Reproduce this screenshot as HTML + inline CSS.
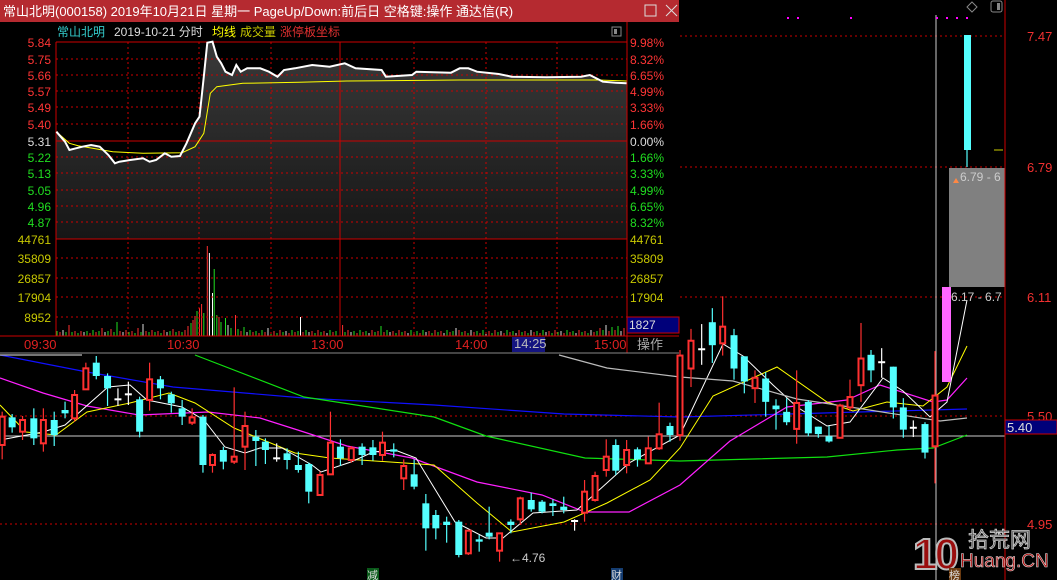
<!DOCTYPE html>
<html><head><meta charset="utf-8">
<style>
html,body{margin:0;padding:0;background:#000;width:1057px;height:580px;overflow:hidden}
svg{display:block}
text{font-family:"Liberation Sans","Noto Sans CJK SC",sans-serif}
</style></head>
<body>
<svg id="s" width="1057" height="580" xmlns="http://www.w3.org/2000/svg">
<rect width="1057" height="580" fill="#000"/>
<g id="main"><line x1="0" y1="36" x2="1005" y2="36" stroke="#c00" stroke-dasharray="2,3"/><line x1="0" y1="167" x2="1005" y2="167" stroke="#c00" stroke-dasharray="2,3"/><line x1="0" y1="297" x2="1005" y2="297" stroke="#c00" stroke-dasharray="2,3"/><line x1="0" y1="416" x2="1005" y2="416" stroke="#c00" stroke-dasharray="2,3"/><line x1="0" y1="524" x2="1005" y2="524" stroke="#c00" stroke-dasharray="2,3"/><line x1="0" y1="436" x2="1005" y2="436" stroke="#ccc"/><line x1="936" y1="15" x2="936" y2="580" stroke="#ccc"/><rect x="787" y="17" width="2" height="2" fill="#f0f"/><rect x="797" y="17" width="2" height="2" fill="#f0f"/><rect x="850" y="17" width="2" height="2" fill="#f0f"/><rect x="936" y="17" width="2" height="2" fill="#f0f"/><rect x="946" y="17" width="2" height="2" fill="#f0f"/><rect x="956" y="17" width="2" height="2" fill="#f0f"/><rect x="966" y="17" width="2" height="2" fill="#f0f"/><polyline points="0,355 87,372 173,387 304,398 434,405 564,414 680,417 967,409" fill="none" stroke="#1010ff" stroke-width="1.2"/><polyline points="195,355 304,397 434,417 486,436 585,458 680,461 827,457 897,450 933,448 967,435" fill="none" stroke="#10e010" stroke-width="1.2"/><polyline points="0,378 43,393 87,406 139,415 208,412 260,418 304,432 347,446 412,458 477,482 542,495 585,512 629,512 680,485 730,441 787,407 847,400 880,385 933,402 947,400 967,378" fill="none" stroke="#ff20ff" stroke-width="1.2"/><polyline points="0,405 26,432 56,435 87,412 130,403 169,393 195,403 234,428 295,453 330,458 434,465 477,503 512,532 564,522 607,503 650,480 680,448 713,396 777,367 827,402 853,411 887,402 923,406 947,387 967,346" fill="none" stroke="#ffff00" stroke-width="1"/><polyline points="0,440 43,432 65,425 108,387 130,385 147,400 182,407 204,420 225,447 245,453 260,448 282,448 312,465 321,472 351,462 373,452 395,450 416,458 455,522 486,538 503,538 533,513 577,510 629,463 680,435 723,344 743,356 773,385 797,407 827,426 850,422 883,378 903,391 930,417 947,402 967,300" fill="none" stroke="#ffffff" stroke-width="1"/><polyline points="0,355 82,355" fill="none" stroke="#bbb" stroke-width="1.2"/><polyline points="559,355 607,368 680,377 733,381 797,399 863,409 940,421 967,418" fill="none" stroke="#bbb" stroke-width="1.2"/><line x1="2.1682567215958368" y1="411.6666666666667" x2="2.1682567215958368" y2="459.3333333333333" stroke="#ff3030" stroke-width="1.2"/><rect x="-0.33174327840416325" y="416.6666666666667" width="5" height="28.333333333333314" fill="#000" stroke="#ff3030" stroke-width="2"/><line x1="12.142237640936687" y1="414" x2="12.142237640936687" y2="432.6666666666667" stroke="#54ffff" stroke-width="1.2"/><rect x="8.642237640936687" y="417.3333333333333" width="7" height="10" fill="#54ffff"/><line x1="22.54987000867303" y1="416" x2="22.54987000867303" y2="440" stroke="#ff3030" stroke-width="1.2"/><rect x="20.04987000867303" y="420" width="5" height="11.666666666666686" fill="#000" stroke="#ff3030" stroke-width="2"/><line x1="33.824804856895055" y1="408.3333333333333" x2="33.824804856895055" y2="445" stroke="#54ffff" stroke-width="1.2"/><rect x="30.324804856895055" y="418.3333333333333" width="7" height="20" fill="#54ffff"/><line x1="43.36513443191674" y1="408.3333333333333" x2="43.36513443191674" y2="451.6666666666667" stroke="#ff3030" stroke-width="1.2"/><rect x="40.86513443191674" y="420" width="5" height="23.333333333333314" fill="#000" stroke="#ff3030" stroke-width="2"/><line x1="54.20641803989592" y1="411.6666666666667" x2="54.20641803989592" y2="446" stroke="#54ffff" stroke-width="1.2"/><rect x="50.70641803989592" y="420" width="7" height="15" fill="#54ffff"/><line x1="65.04770164787511" y1="401.6666666666667" x2="65.04770164787511" y2="418.3333333333333" stroke="#54ffff" stroke-width="1.2"/><rect x="61.54770164787511" y="410" width="7" height="3.333333333333314" fill="#54ffff"/><line x1="74.58803122289679" y1="390" x2="74.58803122289679" y2="421.6666666666667" stroke="#ff3030" stroke-width="1.2"/><rect x="72.08803122289679" y="395" width="5" height="23.333333333333314" fill="#000" stroke="#ff3030" stroke-width="2"/><line x1="85.86296617519514" y1="362.6666666666667" x2="85.86296617519514" y2="390" stroke="#ff3030" stroke-width="1.2"/><rect x="83.36296617519514" y="368.3333333333333" width="5" height="21" fill="#000" stroke="#ff3030" stroke-width="2"/><line x1="96.27059843885516" y1="356" x2="96.27059843885516" y2="379.3333333333333" stroke="#54ffff" stroke-width="1.2"/><rect x="92.77059843885516" y="362.6666666666667" width="7" height="13.333333333333314" fill="#54ffff"/><line x1="107.54553339115351" y1="373.3333333333333" x2="107.54553339115351" y2="406" stroke="#54ffff" stroke-width="1.2"/><rect x="104.04553339115351" y="376" width="7" height="12.333333333333314" fill="#54ffff"/><line x1="117.95316565481353" y1="388.3333333333333" x2="117.95316565481353" y2="406" stroke="#fff" stroke-width="1.2"/><line x1="114.45316565481353" y1="399.3333333333333" x2="121.45316565481353" y2="399.3333333333333" stroke="#fff" stroke-width="2"/><line x1="128.36079791847356" y1="381.6666666666667" x2="128.36079791847356" y2="405" stroke="#fff" stroke-width="1.2"/><line x1="124.86079791847356" y1="394.3333333333333" x2="131.86079791847356" y2="394.3333333333333" stroke="#fff" stroke-width="2"/><line x1="139.63573287077192" y1="396.6666666666667" x2="139.63573287077192" y2="437.3333333333333" stroke="#54ffff" stroke-width="1.2"/><rect x="136.13573287077192" y="399.3333333333333" width="7" height="32.333333333333314" fill="#54ffff"/><line x1="149.60971379011275" y1="362.6666666666667" x2="149.60971379011275" y2="410.6666666666667" stroke="#ff3030" stroke-width="1.2"/><rect x="147.10971379011275" y="379.3333333333333" width="5" height="20.666666666666686" fill="#000" stroke="#ff3030" stroke-width="2"/><line x1="160.45099739809194" y1="376" x2="160.45099739809194" y2="399.3333333333333" stroke="#54ffff" stroke-width="1.2"/><rect x="156.95099739809194" y="379.3333333333333" width="7" height="9" fill="#54ffff"/><line x1="171.29228100607112" y1="391.6666666666667" x2="171.29228100607112" y2="412.6666666666667" stroke="#54ffff" stroke-width="1.2"/><rect x="167.79228100607112" y="394.3333333333333" width="7" height="9" fill="#54ffff"/><line x1="182.1335646140503" y1="400" x2="182.1335646140503" y2="425" stroke="#54ffff" stroke-width="1.2"/><rect x="178.6335646140503" y="408.3333333333333" width="7" height="8.333333333333314" fill="#54ffff"/><line x1="192.10754553339114" y1="408.3333333333333" x2="192.10754553339114" y2="425" stroke="#ff3030" stroke-width="1.2"/><rect x="189.60754553339114" y="417.3333333333333" width="5" height="5.333333333333371" fill="#000" stroke="#ff3030" stroke-width="2"/><line x1="202.94882914137033" y1="415" x2="202.94882914137033" y2="472.6666666666667" stroke="#54ffff" stroke-width="1.2"/><rect x="199.44882914137033" y="416.6666666666667" width="7" height="48.33333333333331" fill="#54ffff"/><line x1="212.48915871639202" y1="453.3333333333333" x2="212.48915871639202" y2="472.6666666666667" stroke="#ff3030" stroke-width="1.2"/><rect x="209.98915871639202" y="455" width="5" height="10" fill="#000" stroke="#ff3030" stroke-width="2"/><line x1="223.33044232437118" y1="446.6666666666667" x2="223.33044232437118" y2="469.3333333333333" stroke="#54ffff" stroke-width="1.2"/><rect x="219.83044232437118" y="450" width="7" height="11.666666666666686" fill="#54ffff"/><line x1="234.17172593235037" y1="387.3333333333333" x2="234.17172593235037" y2="464" stroke="#ff3030" stroke-width="1.2"/><rect x="231.67172593235037" y="456.6666666666667" width="5" height="5" fill="#000" stroke="#ff3030" stroke-width="2"/><line x1="245.01300954032956" y1="411.6666666666667" x2="245.01300954032956" y2="470" stroke="#ff3030" stroke-width="1.2"/><rect x="242.51300954032956" y="426" width="5" height="20.666666666666686" fill="#000" stroke="#ff3030" stroke-width="2"/><line x1="255.85429314830875" y1="430" x2="255.85429314830875" y2="466" stroke="#54ffff" stroke-width="1.2"/><rect x="252.35429314830875" y="436.6666666666667" width="7" height="4.333333333333314" fill="#54ffff"/><line x1="265.3946227233304" y1="438.3333333333333" x2="265.3946227233304" y2="464" stroke="#54ffff" stroke-width="1.2"/><rect x="261.8946227233304" y="441.6666666666667" width="7" height="8.333333333333314" fill="#54ffff"/><line x1="276.6695576756288" y1="443.3333333333333" x2="276.6695576756288" y2="461.6666666666667" stroke="#fff" stroke-width="1.2"/><line x1="273.1695576756288" y1="458.3333333333333" x2="280.1695576756288" y2="458.3333333333333" stroke="#fff" stroke-width="2"/><line x1="287.0771899392888" y1="448.3333333333333" x2="287.0771899392888" y2="469.3333333333333" stroke="#54ffff" stroke-width="1.2"/><rect x="283.5771899392888" y="453.3333333333333" width="7" height="6.666666666666686" fill="#54ffff"/><line x1="298.35212489158717" y1="451.6666666666667" x2="298.35212489158717" y2="472.6666666666667" stroke="#54ffff" stroke-width="1.2"/><rect x="294.85212489158717" y="465" width="7" height="5" fill="#54ffff"/><line x1="308.7597571552472" y1="462.6666666666667" x2="308.7597571552472" y2="503.3333333333333" stroke="#54ffff" stroke-width="1.2"/><rect x="305.2597571552472" y="464" width="7" height="27.666666666666686" fill="#54ffff"/><line x1="320.03469210754555" y1="471.6666666666667" x2="320.03469210754555" y2="496" stroke="#ff3030" stroke-width="1.2"/><rect x="317.53469210754555" y="475" width="5" height="20" fill="#000" stroke="#ff3030" stroke-width="2"/><line x1="330.44232437120554" y1="411.6666666666667" x2="330.44232437120554" y2="475" stroke="#ff3030" stroke-width="1.2"/><rect x="327.94232437120554" y="442.6666666666667" width="5" height="31.666666666666686" fill="#000" stroke="#ff3030" stroke-width="2"/><line x1="340.4163052905464" y1="439.3333333333333" x2="340.4163052905464" y2="466" stroke="#54ffff" stroke-width="1.2"/><rect x="336.9163052905464" y="446.6666666666667" width="7" height="11.666666666666686" fill="#54ffff"/><line x1="351.25758889852556" y1="446" x2="351.25758889852556" y2="462.6666666666667" stroke="#ff3030" stroke-width="1.2"/><rect x="348.75758889852556" y="448.3333333333333" width="5" height="11.666666666666686" fill="#000" stroke="#ff3030" stroke-width="2"/><line x1="362.09887250650475" y1="443.3333333333333" x2="362.09887250650475" y2="465" stroke="#54ffff" stroke-width="1.2"/><rect x="358.59887250650475" y="446.6666666666667" width="7" height="8.333333333333314" fill="#54ffff"/><line x1="372.9401561144839" y1="440" x2="372.9401561144839" y2="460.6666666666667" stroke="#54ffff" stroke-width="1.2"/><rect x="369.4401561144839" y="447.3333333333333" width="7" height="7.666666666666686" fill="#54ffff"/><line x1="382.4804856895056" y1="431.6666666666667" x2="382.4804856895056" y2="460.6666666666667" stroke="#ff3030" stroke-width="1.2"/><rect x="379.9804856895056" y="442.6666666666667" width="5" height="12.333333333333314" fill="#000" stroke="#ff3030" stroke-width="2"/><line x1="393.7554206418040" y1="443.3333333333333" x2="393.7554206418040" y2="457.3333333333333" stroke="#54ffff" stroke-width="1.2"/><rect x="390.2554206418040" y="449.3333333333333" width="7" height="2.333333333333314" fill="#54ffff"/><line x1="403.72940156114486" y1="459.3333333333333" x2="403.72940156114486" y2="490" stroke="#ff3030" stroke-width="1.2"/><rect x="401.22940156114486" y="466" width="5" height="12.333333333333314" fill="#000" stroke="#ff3030" stroke-width="2"/><line x1="414.1370338248049" y1="459.3333333333333" x2="414.1370338248049" y2="489.3333333333333" stroke="#54ffff" stroke-width="1.2"/><rect x="410.6370338248049" y="474.3333333333333" width="7" height="12.333333333333314" fill="#54ffff"/><line x1="425.8413" y1="494" x2="425.8413" y2="550.6666666666666" stroke="#54ffff" stroke-width="1.2"/><rect x="422.3413" y="503.3333333333333" width="7" height="25" fill="#54ffff"/><line x1="435.82133564614045" y1="510" x2="435.82133564614045" y2="539.3333333333333" stroke="#54ffff" stroke-width="1.2"/><rect x="432.32133564614045" y="515" width="7" height="13.333333333333371" fill="#54ffff"/><line x1="446.66261925411965" y1="516.6666666666666" x2="446.66261925411965" y2="542.6666666666666" stroke="#54ffff" stroke-width="1.2"/><rect x="443.16261925411965" y="521.6666666666666" width="7" height="3.333333333333371" fill="#54ffff"/><line x1="458.80294882914137" y1="520" x2="458.80294882914137" y2="557.3333333333334" stroke="#54ffff" stroke-width="1.2"/><rect x="455.30294882914137" y="521.6666666666666" width="7" height="33.333333333333371" fill="#54ffff"/><line x1="468.34327840416306" y1="530" x2="468.34327840416306" y2="555" stroke="#ff3030" stroke-width="1.2"/><rect x="465.84327840416306" y="530.6666666666666" width="5" height="22.666666666666629" fill="#000" stroke="#ff3030" stroke-width="2"/><line x1="479.18456201214225" y1="535" x2="479.18456201214225" y2="551.6666666666666" stroke="#54ffff" stroke-width="1.2"/><rect x="475.68456201214225" y="539.3333333333334" width="7" height="2.333333333333258" fill="#54ffff"/><line x1="489.1585429314831" y1="506.6666666666667" x2="489.1585429314831" y2="539.3333333333334" stroke="#54ffff" stroke-width="1.2"/><rect x="485.6585429314831" y="532.6666666666666" width="7" height="4" fill="#54ffff"/><line x1="499.5661751951431" y1="532.6666666666666" x2="499.5661751951431" y2="561.6666666666666" stroke="#ff3030" stroke-width="1.2"/><rect x="497.0661751951431" y="533.3333333333334" width="5" height="17.333333333333258" fill="#000" stroke="#ff3030" stroke-width="2"/><line x1="510.8411101474415" y1="519.3333333333334" x2="510.8411101474415" y2="533.3333333333334" stroke="#54ffff" stroke-width="1.2"/><rect x="507.3411101474415" y="521.6666666666666" width="7" height="3.333333333333371" fill="#54ffff"/><line x1="520.3014744145707" y1="496.6666666666667" x2="520.3014744145707" y2="525" stroke="#ff3030" stroke-width="1.2"/><rect x="517.8014744145707" y="498.3333333333333" width="5" height="21" fill="#000" stroke="#ff3030" stroke-width="2"/><line x1="531.2230702515178" y1="492.6666666666667" x2="531.2230702515178" y2="511.6666666666667" stroke="#54ffff" stroke-width="1.2"/><rect x="527.7230702515178" y="500" width="7" height="9.333333333333314" fill="#54ffff"/><line x1="542.0642237640937" y1="500" x2="542.0642237640937" y2="513.3333333333334" stroke="#54ffff" stroke-width="1.2"/><rect x="538.5642237640937" y="501.6666666666667" width="7" height="10" fill="#54ffff"/><line x1="552.9054" y1="499.3333333333333" x2="552.9054" y2="516" stroke="#54ffff" stroke-width="1.2"/><rect x="549.4054" y="503.3333333333333" width="7" height="2.666666666666686" fill="#54ffff"/><line x1="563.7467" y1="496.6666666666667" x2="563.7467" y2="513.3333333333334" stroke="#54ffff" stroke-width="1.2"/><rect x="560.2467" y="506.6666666666667" width="7" height="3.333333333333314" fill="#54ffff"/><line x1="574.5880" y1="519.3333333333334" x2="574.5880" y2="530.6666666666666" stroke="#fff" stroke-width="1.2"/><line x1="571.0880" y1="521" x2="578.0880" y2="521" stroke="#fff" stroke-width="2"/><line x1="584.5620" y1="480" x2="584.5620" y2="521.6666666666666" stroke="#ff3030" stroke-width="1.2"/><rect x="582.0620" y="491.6666666666667" width="5" height="21" fill="#000" stroke="#ff3030" stroke-width="2"/><line x1="595.0694" y1="471.6666666666667" x2="595.0694" y2="501.6666666666667" stroke="#ff3030" stroke-width="1.2"/><rect x="592.5694" y="476" width="5" height="24" fill="#000" stroke="#ff3030" stroke-width="2"/><line x1="606.2445" y1="439.3333333333333" x2="606.2445" y2="476.6666666666667" stroke="#ff3030" stroke-width="1.2"/><rect x="603.7445" y="456.6666666666667" width="5" height="13.333333333333314" fill="#000" stroke="#ff3030" stroke-width="2"/><line x1="615.7848" y1="439.3333333333333" x2="615.7848" y2="475" stroke="#54ffff" stroke-width="1.2"/><rect x="612.2848" y="445" width="7" height="25.666666666666686" fill="#54ffff"/><line x1="626.6262" y1="440" x2="626.6262" y2="473.3333333333333" stroke="#ff3030" stroke-width="1.2"/><rect x="624.1262" y="450" width="5" height="15" fill="#000" stroke="#ff3030" stroke-width="2"/><line x1="637.4675" y1="447.3333333333333" x2="637.4675" y2="466.6666666666667" stroke="#54ffff" stroke-width="1.2"/><rect x="633.9675" y="449.3333333333333" width="7" height="10" fill="#54ffff"/><line x1="648.3088" y1="436.6666666666667" x2="648.3088" y2="464" stroke="#ff3030" stroke-width="1.2"/><rect x="645.8088" y="448.3333333333333" width="5" height="15" fill="#000" stroke="#ff3030" stroke-width="2"/><line x1="659.1501" y1="402.6666666666667" x2="659.1501" y2="450" stroke="#ff3030" stroke-width="1.2"/><rect x="656.6501" y="434.3333333333333" width="5" height="14" fill="#000" stroke="#ff3030" stroke-width="2"/><line x1="669.9913" y1="422.6666666666667" x2="669.9913" y2="441.6666666666667" stroke="#54ffff" stroke-width="1.2"/><rect x="666.4913" y="426" width="7" height="9" fill="#54ffff"/><line x1="680" y1="350" x2="680" y2="440.74" stroke="#ff3030" stroke-width="1.2"/><rect x="677.5" y="355.56" width="5" height="79.63" fill="#000" stroke="#ff3030" stroke-width="2"/><line x1="691" y1="328.89" x2="691" y2="387.04" stroke="#ff3030" stroke-width="1.2"/><rect x="688.5" y="340.74" width="5" height="27.78" fill="#000" stroke="#ff3030" stroke-width="2"/><line x1="701.67" y1="324.07" x2="701.67" y2="364.81" stroke="#fff" stroke-width="1.2"/><line x1="698.17" y1="349.26" x2="705.17" y2="349.26" stroke="#fff" stroke-width="2"/><line x1="712.33" y1="308.15" x2="712.33" y2="362.96" stroke="#54ffff" stroke-width="1.2"/><rect x="708.83" y="322.22" width="7" height="22.96" fill="#54ffff"/><line x1="722.67" y1="296.3" x2="722.67" y2="355.56" stroke="#ff3030" stroke-width="1.2"/><rect x="720.17" y="326.67" width="5" height="16.67" fill="#000" stroke="#ff3030" stroke-width="2"/><line x1="734" y1="328.89" x2="734" y2="379.63" stroke="#54ffff" stroke-width="1.2"/><rect x="730.5" y="335.19" width="7" height="33.33" fill="#54ffff"/><line x1="744.33" y1="356.3" x2="744.33" y2="393.33" stroke="#54ffff" stroke-width="1.2"/><rect x="740.83" y="356.3" width="7" height="25.19" fill="#54ffff"/><line x1="755" y1="370.37" x2="755" y2="402.96" stroke="#ff3030" stroke-width="1.2"/><rect x="752.5" y="377.78" width="5" height="10.37" fill="#000" stroke="#ff3030" stroke-width="2"/><line x1="765.67" y1="372.22" x2="765.67" y2="416.67" stroke="#54ffff" stroke-width="1.2"/><rect x="762.17" y="378.52" width="7" height="23.33" fill="#54ffff"/><line x1="776" y1="399.26" x2="776" y2="429.63" stroke="#54ffff" stroke-width="1.2"/><rect x="772.5" y="405.56" width="7" height="3.7" fill="#54ffff"/><line x1="786.67" y1="398.15" x2="786.67" y2="425.19" stroke="#54ffff" stroke-width="1.2"/><rect x="783.17" y="411.85" width="7" height="10.37" fill="#54ffff"/><line x1="796.67" y1="370.37" x2="796.67" y2="443.7" stroke="#ff3030" stroke-width="1.2"/><rect x="794.17" y="402.96" width="5" height="25.93" fill="#000" stroke="#ff3030" stroke-width="2"/><line x1="808.33" y1="400" x2="808.33" y2="436.3" stroke="#54ffff" stroke-width="1.2"/><rect x="804.83" y="401.85" width="7" height="31.48" fill="#54ffff"/><line x1="818.33" y1="426.67" x2="818.33" y2="437.78" stroke="#54ffff" stroke-width="1.2"/><rect x="814.83" y="426.67" width="7" height="7.41" fill="#54ffff"/><line x1="829" y1="425.93" x2="829" y2="442.59" stroke="#54ffff" stroke-width="1.2"/><rect x="825.5" y="436.3" width="7" height="5.19" fill="#54ffff"/><line x1="840" y1="403.7" x2="840" y2="437.78" stroke="#ff3030" stroke-width="1.2"/><rect x="837.5" y="405.56" width="5" height="32.22" fill="#000" stroke="#ff3030" stroke-width="2"/><line x1="850" y1="379.63" x2="850" y2="411.11" stroke="#ff3030" stroke-width="1.2"/><rect x="847.5" y="397.04" width="5" height="10.37" fill="#000" stroke="#ff3030" stroke-width="2"/><line x1="861" y1="322.96" x2="861" y2="401.85" stroke="#ff3030" stroke-width="1.2"/><rect x="858.5" y="358.52" width="5" height="26.67" fill="#000" stroke="#ff3030" stroke-width="2"/><line x1="871" y1="350" x2="871" y2="382.22" stroke="#54ffff" stroke-width="1.2"/><rect x="867.5" y="354.81" width="7" height="15.56" fill="#54ffff"/><line x1="881.67" y1="348.15" x2="881.67" y2="377.78" stroke="#fff" stroke-width="1.2"/><line x1="878.17" y1="362.22" x2="885.17" y2="362.22" stroke="#fff" stroke-width="2"/><line x1="893.33" y1="366.67" x2="893.33" y2="418.52" stroke="#54ffff" stroke-width="1.2"/><rect x="889.83" y="366.67" width="7" height="40.74" fill="#54ffff"/><line x1="903.33" y1="398.15" x2="903.33" y2="437.78" stroke="#54ffff" stroke-width="1.2"/><rect x="899.83" y="407.41" width="7" height="22.22" fill="#54ffff"/><line x1="913.33" y1="420.37" x2="913.33" y2="437.04" stroke="#fff" stroke-width="1.2"/><line x1="909.83" y1="427.78" x2="916.83" y2="427.78" stroke="#fff" stroke-width="2"/><line x1="925" y1="422.22" x2="925" y2="458.52" stroke="#54ffff" stroke-width="1.2"/><rect x="921.5" y="424.07" width="7" height="28.52" fill="#54ffff"/><line x1="935" y1="351.11" x2="935" y2="483.33" stroke="#ff3030" stroke-width="1.2"/><rect x="932.5" y="395.56" width="5" height="50.74" fill="#000" stroke="#ff3030" stroke-width="2"/><rect x="949" y="168" width="56" height="119" fill="#808080"/><rect x="942" y="287" width="9" height="95" fill="#ff66ff"/><rect x="964" y="35" width="7" height="115" fill="#54ffff"/><line x1="967" y1="150" x2="967" y2="167" stroke="#54ffff" stroke-width="1.2"/><line x1="994" y1="150" x2="1003" y2="150" stroke="#cc0"/><text x="960" y="181" fill="#ccc" font-size="12">6.79 - 6</text><path d="M953 183 l3 -5 l3 5z" fill="#f84"/><text x="951" y="301" fill="#ccc" font-size="12">6.17 - 6.7</text><text x="510" y="562" fill="#ccc" font-size="12">←4.76</text></g>
<line x1="1005" y1="0" x2="1005" y2="580" stroke="#c00" stroke-width="1"/>
<g fill="#f03030" font-size="13">
<text x="1027" y="41">7.47</text><text x="1027" y="172">6.79</text><text x="1027" y="302">6.11</text><text x="1027" y="421">5.50</text><text x="1027" y="529">4.95</text>
</g>
<rect x="1005" y="420" width="52" height="14" fill="#00007a" stroke="#c00"/>
<text x="1007" y="432" fill="#ddd" font-size="13">5.40</text>
<path d="M972 2 l5 5 l-5 5 l-5 -5z" fill="none" stroke="#888"/>
<rect x="991" y="1" width="11" height="11" fill="none" stroke="#888" rx="2"/><rect x="997" y="3" width="3" height="7" fill="#888"/>
<g id="pop">
<rect x="0" y="0" width="679" height="22" fill="#b52a30"/>
<text x="3" y="16" fill="#fff" font-size="13">常山北明(000158) 2019年10月21日 星期一 PageUp/Down:前后日 空格键:操作 通达信(R)</text>
<rect x="645" y="5" width="11" height="11" fill="none" stroke="#ddd"/>
<path d="M666 5 l11 11 M677 5 l-11 11" stroke="#ddd"/>
<rect x="0" y="22" width="679" height="331" fill="#000"/>
<defs><linearGradient id="gf" x1="0" y1="0" x2="0" y2="1"><stop offset="0" stop-color="#3a3a3a"/><stop offset="1" stop-color="#161616"/></linearGradient></defs>
<g id="intra">
<line x1="57" y1="336" x2="57" y2="331" stroke="#20e020"/><line x1="60" y1="336" x2="60" y2="332" stroke="#ff3030"/><line x1="63" y1="336" x2="63" y2="330" stroke="#ddd"/><line x1="66" y1="336" x2="66" y2="332" stroke="#20e020"/><line x1="69" y1="336" x2="69" y2="325" stroke="#ff3030"/><line x1="72" y1="336" x2="72" y2="332" stroke="#20e020"/><line x1="75" y1="336" x2="75" y2="331" stroke="#ff3030"/><line x1="78" y1="336" x2="78" y2="333" stroke="#20e020"/><line x1="81" y1="336" x2="81" y2="331" stroke="#ff3030"/><line x1="84" y1="336" x2="84" y2="332" stroke="#ddd"/><line x1="87" y1="336" x2="87" y2="331" stroke="#20e020"/><line x1="90" y1="336" x2="90" y2="333" stroke="#ff3030"/><line x1="93" y1="336" x2="93" y2="330" stroke="#20e020"/><line x1="96" y1="336" x2="96" y2="332" stroke="#ff3030"/><line x1="99" y1="336" x2="99" y2="331" stroke="#20e020"/><line x1="102" y1="336" x2="102" y2="328" stroke="#ff3030"/><line x1="105" y1="336" x2="105" y2="332" stroke="#ddd"/><line x1="108" y1="336" x2="108" y2="331" stroke="#20e020"/><line x1="111" y1="336" x2="111" y2="329" stroke="#ff3030"/><line x1="114" y1="336" x2="114" y2="332" stroke="#20e020"/><line x1="117" y1="336" x2="117" y2="322" stroke="#20e020"/><line x1="120" y1="336" x2="120" y2="331" stroke="#ff3030"/><line x1="123" y1="336" x2="123" y2="332" stroke="#ddd"/><line x1="126" y1="336" x2="126" y2="330" stroke="#ff3030"/><line x1="129" y1="336" x2="129" y2="332" stroke="#20e020"/><line x1="132" y1="336" x2="132" y2="331" stroke="#ff3030"/><line x1="135" y1="336" x2="135" y2="333" stroke="#20e020"/><line x1="138" y1="336" x2="138" y2="328" stroke="#ff3030"/><line x1="141" y1="336" x2="141" y2="332" stroke="#20e020"/><line x1="143" y1="336" x2="143" y2="324" stroke="#ddd"/><line x1="146" y1="336" x2="146" y2="331" stroke="#ff3030"/><line x1="149" y1="336" x2="149" y2="332" stroke="#20e020"/><line x1="152" y1="336" x2="152" y2="330" stroke="#ff3030"/><line x1="155" y1="336" x2="155" y2="332" stroke="#20e020"/><line x1="158" y1="336" x2="158" y2="331" stroke="#ff3030"/><line x1="161" y1="336" x2="161" y2="333" stroke="#20e020"/><line x1="164" y1="336" x2="164" y2="330" stroke="#ff3030"/><line x1="167" y1="336" x2="167" y2="332" stroke="#ddd"/><line x1="170" y1="336" x2="170" y2="331" stroke="#20e020"/><line x1="173" y1="336" x2="173" y2="329" stroke="#ff3030"/><line x1="176" y1="336" x2="176" y2="332" stroke="#20e020"/><line x1="179" y1="336" x2="179" y2="331" stroke="#ff3030"/><line x1="182" y1="336" x2="182" y2="332" stroke="#20e020"/><line x1="185" y1="336" x2="185" y2="330" stroke="#ff3030"/><line x1="188" y1="336" x2="188" y2="326" stroke="#ff3030"/><line x1="191" y1="336" x2="191" y2="323" stroke="#20e020"/><line x1="193" y1="336" x2="193" y2="320" stroke="#ff3030"/><line x1="195" y1="336" x2="195" y2="316" stroke="#ff3030"/><line x1="197" y1="336" x2="197" y2="311" stroke="#20e020"/><line x1="199.5" y1="336" x2="199.5" y2="308" stroke="#ff3030"/><line x1="201.6" y1="336" x2="201.6" y2="304" stroke="#ff3030"/><line x1="203.8" y1="336" x2="203.8" y2="313" stroke="#20e020"/><line x1="207.3" y1="336" x2="207.3" y2="246" stroke="#ff3030"/><line x1="209.4" y1="336" x2="209.4" y2="253" stroke="#fff"/><line x1="212.5" y1="336" x2="212.5" y2="293" stroke="#fff"/><line x1="214.2" y1="336" x2="214.2" y2="269" stroke="#20e020"/><line x1="216.8" y1="336" x2="216.8" y2="315" stroke="#20e020"/><line x1="219" y1="336" x2="219" y2="317" stroke="#ff3030"/><line x1="221" y1="336" x2="221" y2="322" stroke="#20e020"/><line x1="225.5" y1="336" x2="225.5" y2="318" stroke="#20e020"/><line x1="228" y1="336" x2="228" y2="325" stroke="#ddd"/><line x1="231" y1="336" x2="231" y2="328" stroke="#20e020"/><line x1="235.5" y1="336" x2="235.5" y2="315" stroke="#ff3030"/><line x1="238" y1="336" x2="238" y2="329" stroke="#20e020"/><line x1="241" y1="336" x2="241" y2="331" stroke="#ff3030"/><line x1="244" y1="336" x2="244" y2="327" stroke="#20e020"/><line x1="247" y1="336" x2="247" y2="332" stroke="#ddd"/><line x1="250" y1="336" x2="250" y2="330" stroke="#20e020"/><line x1="253" y1="336" x2="253" y2="332" stroke="#ff3030"/><line x1="256" y1="336" x2="256" y2="331" stroke="#20e020"/><line x1="259" y1="336" x2="259" y2="333" stroke="#ff3030"/><line x1="262" y1="336" x2="262" y2="330" stroke="#20e020"/><line x1="265" y1="336" x2="265" y2="332" stroke="#ff3030"/><line x1="268" y1="336" x2="268" y2="328" stroke="#ddd"/><line x1="271" y1="336" x2="271" y2="332" stroke="#20e020"/><line x1="274" y1="336" x2="274" y2="331" stroke="#ff3030"/><line x1="277" y1="336" x2="277" y2="333" stroke="#20e020"/><line x1="280" y1="336" x2="280" y2="330" stroke="#ff3030"/><line x1="283" y1="336" x2="283" y2="332" stroke="#20e020"/><line x1="286" y1="336" x2="286" y2="331" stroke="#ddd"/><line x1="289" y1="336" x2="289" y2="333" stroke="#ff3030"/><line x1="292" y1="336" x2="292" y2="330" stroke="#20e020"/><line x1="295" y1="336" x2="295" y2="332" stroke="#ff3030"/><line x1="298" y1="336" x2="298" y2="331" stroke="#20e020"/><line x1="300.5" y1="336" x2="300.5" y2="317" stroke="#fff"/><line x1="303" y1="336" x2="303" y2="332" stroke="#ff3030"/><line x1="306" y1="336" x2="306" y2="330" stroke="#20e020"/><line x1="309" y1="336" x2="309" y2="332" stroke="#ddd"/><line x1="312" y1="336" x2="312" y2="331" stroke="#ff3030"/><line x1="315" y1="336" x2="315" y2="333" stroke="#20e020"/><line x1="318" y1="336" x2="318" y2="330" stroke="#ff3030"/><line x1="321" y1="336" x2="321" y2="332" stroke="#20e020"/><line x1="324" y1="336" x2="324" y2="331" stroke="#ff3030"/><line x1="327" y1="336" x2="327" y2="333" stroke="#ddd"/><line x1="330" y1="336" x2="330" y2="330" stroke="#20e020"/><line x1="333" y1="336" x2="333" y2="332" stroke="#ff3030"/><line x1="336" y1="336" x2="336" y2="331" stroke="#20e020"/><line x1="342.6" y1="336" x2="342.6" y2="325" stroke="#ff3030"/><line x1="345" y1="336" x2="345" y2="332" stroke="#20e020"/><line x1="348" y1="336" x2="348" y2="330" stroke="#ff3030"/><line x1="351" y1="336" x2="351" y2="332" stroke="#ddd"/><line x1="354" y1="336" x2="354" y2="331" stroke="#20e020"/><line x1="357" y1="336" x2="357" y2="333" stroke="#ff3030"/><line x1="360" y1="336" x2="360" y2="330" stroke="#20e020"/><line x1="363" y1="336" x2="363" y2="332" stroke="#ff3030"/><line x1="366" y1="336" x2="366" y2="331" stroke="#20e020"/><line x1="369" y1="336" x2="369" y2="333" stroke="#ddd"/><line x1="372" y1="336" x2="372" y2="330" stroke="#ff3030"/><line x1="375" y1="336" x2="375" y2="332" stroke="#20e020"/><line x1="378" y1="336" x2="378" y2="331" stroke="#ff3030"/><line x1="381" y1="336" x2="381" y2="326" stroke="#20e020"/><line x1="384" y1="336" x2="384" y2="332" stroke="#ff3030"/><line x1="387" y1="336" x2="387" y2="330" stroke="#20e020"/><line x1="390" y1="336" x2="390" y2="332" stroke="#ddd"/><line x1="393" y1="336" x2="393" y2="331" stroke="#ff3030"/><line x1="396" y1="336" x2="396" y2="333" stroke="#20e020"/><line x1="399" y1="336" x2="399" y2="330" stroke="#ff3030"/><line x1="402" y1="336" x2="402" y2="332" stroke="#20e020"/><line x1="405" y1="336" x2="405" y2="331" stroke="#ff3030"/><line x1="408" y1="336" x2="408" y2="333" stroke="#ddd"/><line x1="411" y1="336" x2="411" y2="330" stroke="#20e020"/><line x1="414" y1="336" x2="414" y2="332" stroke="#ff3030"/><line x1="417" y1="336" x2="417" y2="331" stroke="#20e020"/><line x1="420" y1="336" x2="420" y2="333" stroke="#ff3030"/><line x1="423" y1="336" x2="423" y2="330" stroke="#20e020"/><line x1="426" y1="336" x2="426" y2="332" stroke="#ddd"/><line x1="429" y1="336" x2="429" y2="331" stroke="#ff3030"/><line x1="432" y1="336" x2="432" y2="333" stroke="#20e020"/><line x1="435" y1="336" x2="435" y2="330" stroke="#ff3030"/><line x1="438" y1="336" x2="438" y2="332" stroke="#20e020"/><line x1="441" y1="336" x2="441" y2="331" stroke="#ff3030"/><line x1="444" y1="336" x2="444" y2="333" stroke="#ddd"/><line x1="447" y1="336" x2="447" y2="330" stroke="#20e020"/><line x1="450" y1="336" x2="450" y2="332" stroke="#ff3030"/><line x1="453" y1="336" x2="453" y2="331" stroke="#20e020"/><line x1="456" y1="336" x2="456" y2="328" stroke="#ddd"/><line x1="459" y1="336" x2="459" y2="330" stroke="#ff3030"/><line x1="462" y1="336" x2="462" y2="332" stroke="#20e020"/><line x1="465" y1="336" x2="465" y2="331" stroke="#ff3030"/><line x1="468" y1="336" x2="468" y2="333" stroke="#20e020"/><line x1="471" y1="336" x2="471" y2="330" stroke="#ddd"/><line x1="474" y1="336" x2="474" y2="332" stroke="#ff3030"/><line x1="477" y1="336" x2="477" y2="331" stroke="#20e020"/><line x1="480" y1="336" x2="480" y2="333" stroke="#ff3030"/><line x1="483" y1="336" x2="483" y2="330" stroke="#20e020"/><line x1="486" y1="336" x2="486" y2="332" stroke="#ddd"/><line x1="489" y1="336" x2="489" y2="331" stroke="#ff3030"/><line x1="492" y1="336" x2="492" y2="333" stroke="#20e020"/><line x1="495" y1="336" x2="495" y2="330" stroke="#ff3030"/><line x1="498" y1="336" x2="498" y2="332" stroke="#20e020"/><line x1="501" y1="336" x2="501" y2="331" stroke="#ddd"/><line x1="504" y1="336" x2="504" y2="333" stroke="#ff3030"/><line x1="507" y1="336" x2="507" y2="330" stroke="#20e020"/><line x1="510" y1="336" x2="510" y2="332" stroke="#ff3030"/><line x1="513" y1="336" x2="513" y2="331" stroke="#20e020"/><line x1="516" y1="336" x2="516" y2="333" stroke="#ddd"/><line x1="519" y1="336" x2="519" y2="330" stroke="#ff3030"/><line x1="522" y1="336" x2="522" y2="332" stroke="#20e020"/><line x1="525" y1="336" x2="525" y2="331" stroke="#ff3030"/><line x1="528" y1="336" x2="528" y2="333" stroke="#20e020"/><line x1="531" y1="336" x2="531" y2="330" stroke="#ddd"/><line x1="534" y1="336" x2="534" y2="332" stroke="#ff3030"/><line x1="537" y1="336" x2="537" y2="331" stroke="#20e020"/><line x1="540" y1="336" x2="540" y2="333" stroke="#ff3030"/><line x1="543" y1="336" x2="543" y2="330" stroke="#20e020"/><line x1="546" y1="336" x2="546" y2="332" stroke="#ddd"/><line x1="549" y1="336" x2="549" y2="331" stroke="#ff3030"/><line x1="552" y1="336" x2="552" y2="333" stroke="#20e020"/><line x1="555" y1="336" x2="555" y2="330" stroke="#ff3030"/><line x1="558" y1="336" x2="558" y2="332" stroke="#20e020"/><line x1="561" y1="336" x2="561" y2="331" stroke="#ddd"/><line x1="564" y1="336" x2="564" y2="333" stroke="#ff3030"/><line x1="567" y1="336" x2="567" y2="330" stroke="#20e020"/><line x1="570" y1="336" x2="570" y2="332" stroke="#ff3030"/><line x1="573" y1="336" x2="573" y2="331" stroke="#20e020"/><line x1="576" y1="336" x2="576" y2="333" stroke="#ddd"/><line x1="579" y1="336" x2="579" y2="330" stroke="#ff3030"/><line x1="582" y1="336" x2="582" y2="332" stroke="#20e020"/><line x1="585" y1="336" x2="585" y2="331" stroke="#ff3030"/><line x1="588" y1="336" x2="588" y2="333" stroke="#20e020"/><line x1="591" y1="336" x2="591" y2="330" stroke="#ddd"/><line x1="594" y1="336" x2="594" y2="332" stroke="#ff3030"/><line x1="597" y1="336" x2="597" y2="331" stroke="#20e020"/><line x1="600" y1="336" x2="600" y2="328" stroke="#ff3030"/><line x1="603" y1="336" x2="603" y2="330" stroke="#20e020"/><line x1="606" y1="336" x2="606" y2="325" stroke="#ddd"/><line x1="609" y1="336" x2="609" y2="331" stroke="#ff3030"/><line x1="612" y1="336" x2="612" y2="327" stroke="#20e020"/><line x1="615" y1="336" x2="615" y2="330" stroke="#ff3030"/><line x1="618" y1="336" x2="618" y2="326" stroke="#20e020"/><line x1="621" y1="336" x2="621" y2="331" stroke="#ddd"/><line x1="624" y1="336" x2="624" y2="328" stroke="#ff3030"/>
<polygon points="56.4,131.7 65,141.7 69.4,150 75.9,148.3 82.4,146.7 91.1,145 99.7,146.7 108.4,155 114.9,163.3 119.3,161.7 130.1,160 143.1,158.3 149.6,161.7 156.1,160 164.8,153.3 171.3,156.7 180,156 186.5,143.3 190.8,133.3 195.1,123.3 199.5,116.7 203.8,76.7 207.3,42.7 212.5,41.7 216.8,56.7 221.2,63.3 225.5,71.7 232,75 236.3,65 240.7,71.7 247.2,68.3 260.2,68.3 268.9,71.7 277.5,76.7 284,70 294.9,68.3 312.2,65 329.6,66.7 344.8,63.3 355.6,68.3 381.6,70 385.9,76.7 412,75 416.3,71.7 451,72.7 459.7,68.3 468.3,68.3 477,71.7 498.7,74 511.7,76.7 546.4,77.3 581.1,76.7 589.8,75 602.8,81.7 615.8,82.7 626.6,83.3 626.6,239 56.4,239" fill="url(#gf)"/>
<line x1="56" y1="59" x2="627" y2="59" stroke="#c00" stroke-dasharray="2,3"/><line x1="56" y1="75" x2="627" y2="75" stroke="#c00" stroke-dasharray="2,3"/><line x1="56" y1="91" x2="627" y2="91" stroke="#c00" stroke-dasharray="2,3"/><line x1="56" y1="107" x2="627" y2="107" stroke="#c00" stroke-dasharray="2,3"/><line x1="56" y1="124" x2="627" y2="124" stroke="#c00" stroke-dasharray="2,3"/><line x1="56" y1="157" x2="627" y2="157" stroke="#c00" stroke-dasharray="2,3"/><line x1="56" y1="173" x2="627" y2="173" stroke="#c00" stroke-dasharray="2,3"/><line x1="56" y1="190" x2="627" y2="190" stroke="#c00" stroke-dasharray="2,3"/><line x1="56" y1="206" x2="627" y2="206" stroke="#c00" stroke-dasharray="2,3"/><line x1="56" y1="222" x2="627" y2="222" stroke="#c00" stroke-dasharray="2,3"/><line x1="56" y1="258" x2="627" y2="258" stroke="#c00" stroke-dasharray="2,3"/><line x1="56" y1="278" x2="627" y2="278" stroke="#c00" stroke-dasharray="2,3"/><line x1="56" y1="297" x2="627" y2="297" stroke="#c00" stroke-dasharray="2,3"/><line x1="56" y1="317" x2="627" y2="317" stroke="#c00" stroke-dasharray="2,3"/><line x1="56" y1="42" x2="627" y2="42" stroke="#c00"/><line x1="56" y1="141" x2="627" y2="141" stroke="#c00"/><line x1="56" y1="239" x2="627" y2="239" stroke="#c00"/><line x1="128" y1="42" x2="128" y2="336" stroke="#c00" stroke-dasharray="2,3"/><line x1="199" y1="42" x2="199" y2="336" stroke="#c00" stroke-dasharray="2,3"/><line x1="271" y1="42" x2="271" y2="336" stroke="#c00" stroke-dasharray="2,3"/><line x1="414" y1="42" x2="414" y2="336" stroke="#c00" stroke-dasharray="2,3"/><line x1="486" y1="42" x2="486" y2="336" stroke="#c00" stroke-dasharray="2,3"/><line x1="557" y1="42" x2="557" y2="336" stroke="#c00" stroke-dasharray="2,3"/><line x1="340" y1="42" x2="340" y2="336" stroke="#c00"/><line x1="56" y1="42" x2="56" y2="336" stroke="#c00"/><line x1="627" y1="22" x2="627" y2="353" stroke="#c00"/>
<polyline points="56.4,131.7 69.4,143.3 78.1,145.7 112.7,151.7 143.1,153.3 182.1,152.7 195.1,146.7 203.8,133.3 210.3,93.3 216.8,86.7 242.8,83.3 299.2,82.3 346.9,81 459.7,80 598.4,80 626.6,81" fill="none" stroke="#ffff00" stroke-width="1"/>
<polyline points="56.4,131.7 65,141.7 69.4,150 75.9,148.3 82.4,146.7 91.1,145 99.7,146.7 108.4,155 114.9,163.3 119.3,161.7 130.1,160 143.1,158.3 149.6,161.7 156.1,160 164.8,153.3 171.3,156.7 180,156 186.5,143.3 190.8,133.3 195.1,123.3 199.5,116.7 203.8,76.7 207.3,42.7 212.5,41.7 216.8,56.7 221.2,63.3 225.5,71.7 232,75 236.3,65 240.7,71.7 247.2,68.3 260.2,68.3 268.9,71.7 277.5,76.7 284,70 294.9,68.3 312.2,65 329.6,66.7 344.8,63.3 355.6,68.3 381.6,70 385.9,76.7 412,75 416.3,71.7 451,72.7 459.7,68.3 468.3,68.3 477,71.7 498.7,74 511.7,76.7 546.4,77.3 581.1,76.7 589.8,75 602.8,81.7 615.8,82.7 626.6,83.3" fill="none" stroke="#fff" stroke-width="2"/>
<g font-size="12" text-anchor="end">
<text x="51" y="47" fill="#ff3535">5.84</text><text x="51" y="64" fill="#ff3535">5.75</text><text x="51" y="80" fill="#ff3535">5.66</text><text x="51" y="96" fill="#ff3535">5.57</text><text x="51" y="112" fill="#ff3535">5.49</text><text x="51" y="129" fill="#ff3535">5.40</text><text x="51" y="146" fill="#ddd">5.31</text><text x="51" y="162" fill="#20dd20">5.22</text><text x="51" y="178" fill="#20dd20">5.13</text><text x="51" y="195" fill="#20dd20">5.05</text><text x="51" y="211" fill="#20dd20">4.96</text><text x="51" y="227" fill="#20dd20">4.87</text>
<text x="51" y="244" fill="#c8c800">44761</text><text x="51" y="263" fill="#c8c800">35809</text><text x="51" y="283" fill="#c8c800">26857</text><text x="51" y="302" fill="#c8c800">17904</text><text x="51" y="322" fill="#c8c800">8952</text>
</g>
<g font-size="12">
<text x="630" y="47" fill="#ff3535">9.98%</text><text x="630" y="64" fill="#ff3535">8.32%</text><text x="630" y="80" fill="#ff3535">6.65%</text><text x="630" y="96" fill="#ff3535">4.99%</text><text x="630" y="112" fill="#ff3535">3.33%</text><text x="630" y="129" fill="#ff3535">1.66%</text><text x="630" y="146" fill="#ddd">0.00%</text><text x="630" y="162" fill="#20dd20">1.66%</text><text x="630" y="178" fill="#20dd20">3.33%</text><text x="630" y="195" fill="#20dd20">4.99%</text><text x="630" y="211" fill="#20dd20">6.65%</text><text x="630" y="227" fill="#20dd20">8.32%</text>
<text x="630" y="244" fill="#c8c800">44761</text><text x="630" y="263" fill="#c8c800">35809</text><text x="630" y="283" fill="#c8c800">26857</text><text x="630" y="302" fill="#c8c800">17904</text>
</g>
</g>
<text x="57" y="36" fill="#33cccc" font-size="12">常山北明</text>
<text x="114" y="36" fill="#ddd" font-size="12">2019-10-21 分时</text>
<text x="212" y="36" fill="#ffff00" font-size="12">均线</text>
<text x="240" y="36" fill="#c8c800" font-size="12">成交量</text>
<text x="280" y="36" fill="#e03030" font-size="12">涨停板坐标</text>
<rect x="612" y="27" width="9" height="9" fill="none" stroke="#888"/><rect x="614" y="29" width="3" height="5" fill="#888"/>
<rect x="512" y="337" width="33" height="15" fill="#141480"/>
<g font-size="13" fill="#e02020">
<text x="24" y="349">09:30</text><text x="167" y="349">10:30</text><text x="311" y="349">13:00</text><text x="455" y="349">14:00</text><text x="594" y="349">15:00</text>
</g>
<text x="514" y="348" fill="#bbb" font-size="13">14:25</text>
<text x="637" y="349" fill="#aaa" font-size="13">操作</text>
<rect x="627" y="317" width="52" height="16" fill="#00007a" stroke="#c00"/>
<text x="629" y="329" fill="#ddd" font-size="12">1827</text>
<line x1="0" y1="336" x2="679" y2="336" stroke="#c00"/>
<line x1="0" y1="353" x2="679" y2="353" stroke="#888"/>
</g>
<g>
<text x="913" y="569" font-size="44" font-weight="bold" fill="#9a0d0d" stroke="#bbb" stroke-width="2" letter-spacing="-3">10</text>
<text x="968" y="547" font-size="21" fill="#555" stroke="#ccc" stroke-width="0.8">拾荒网</text>
<text x="960" y="567" font-size="19" fill="#b01010" stroke="#ddd" stroke-width="0.6">Huang.CN</text>
</g>
<rect x="367" y="568" width="12" height="12" fill="#0a5a1a"/><text x="367" y="579" fill="#ddd" font-size="11">减</text>
<rect x="611" y="568" width="12" height="12" fill="#143c70"/><text x="611" y="579" fill="#ddd" font-size="11">财</text>
<rect x="949" y="568" width="12" height="12" fill="#6a3a10"/><text x="949" y="579" fill="#ddd" font-size="11">榜</text>
</svg>
</body></html>
